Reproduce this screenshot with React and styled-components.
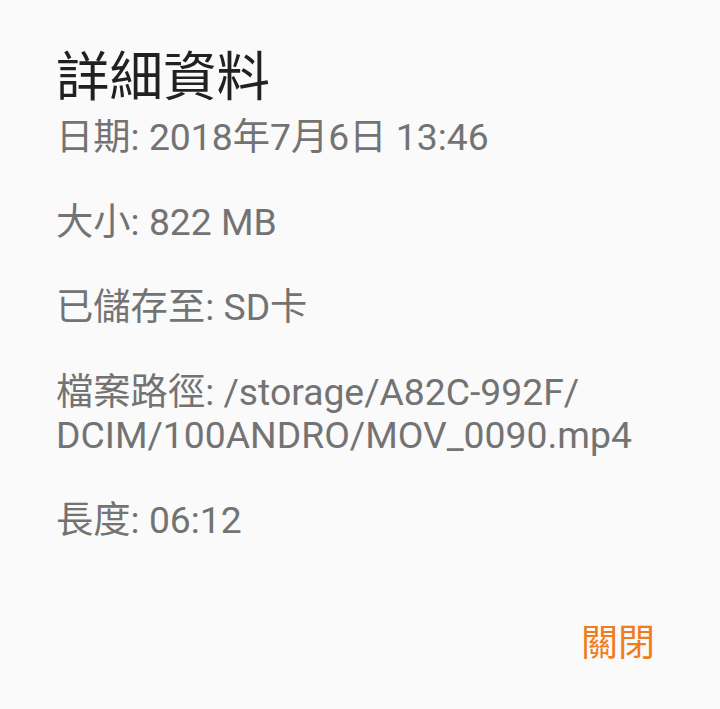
import React from "react";
import styled, { createGlobalStyle } from "styled-components";

const GlobalStyle = createGlobalStyle`
  html, body {
    margin: 0;
    padding: 0;
    background: #fafafa;
  }
  body {
    font-family: Roboto, "Noto Sans CJK TC", "Noto Sans", sans-serif;
  }
`;

const details = [
  { label: "日期", value: ["2018年7月6日 13:46"] },
  { label: "大小", value: ["822 MB"] },
  { label: "已儲存至", value: ["SD卡"] },
  { label: "檔案路徑", value: ["/storage/A82C-992F/", "DCIM/100ANDRO/MOV_0090.mp4"] },
  { label: "長度", value: ["06:12"] },
];

export default function App() {
  return (
    <>
      <GlobalStyle />
      <Dialog>
        <Title>詳細資料</Title>
        <List>
          {details.map((d) => (
            <Item key={d.label}>
              {d.label}: {d.value[0]}
              {d.value.slice(1).map((v) => (
                <React.Fragment key={v}>
                  <br />
                  {v}
                </React.Fragment>
              ))}
            </Item>
          ))}
        </List>
        <Actions>
          <TextButton>關閉</TextButton>
        </Actions>
      </Dialog>
    </>
  );
}

const Dialog = styled.div`
  width: 720px;
  height: 709px;
  box-sizing: border-box;
  padding: 48px 0 0 56px;
  display: flex;
  flex-direction: column;
  background: #fafafa;
`;

const Title = styled.h1`
  margin: 0;
  font-size: 53.5px;
  font-weight: 400;
  line-height: 60px;
  color: #212121;
`;

const List = styled.div`
  display: flex;
  flex-direction: column;
  gap: 42px;
  margin-top: 8px;
`;

const Item = styled.div`
  font-size: 37.3px;
  line-height: 43px;
  color: #737373;
`;

const Actions = styled.div`
  display: flex;
  justify-content: flex-end;
  margin-top: 80px;
  padding-right: 65px;
`;

const TextButton = styled.button`
  border: none;
  background: none;
  padding: 0;
  font-family: inherit;
  font-size: 37px;
  line-height: 43px;
  color: #ef7d1c;
  cursor: pointer;
`;
